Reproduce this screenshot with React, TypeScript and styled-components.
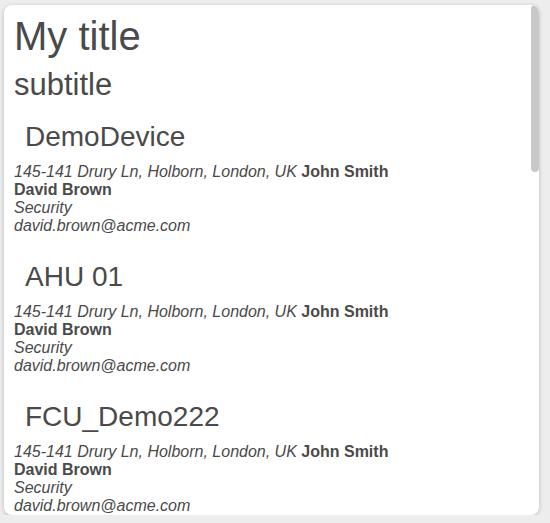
import React from 'react';
import styled, { createGlobalStyle } from 'styled-components';

const GlobalStyle = createGlobalStyle`
  html, body {
    margin: 0;
    padding: 0;
    background: #ededed;
  }

  body {
    font-family: "Liberation Sans", Arial, sans-serif;
    color: #4a4a4a;
  }
`;

const Page = styled.div`
  padding: 5px 0 0 4px;
`;

const Card = styled.div`
  width: 535px;
  height: 510px;
  background: #fff;
  border-radius: 8px;
  box-shadow: 0 1px 4px rgba(0, 0, 0, 0.22);
  overflow: hidden;
  display: flex;
`;

const Content = styled.div`
  flex: 1;
  min-width: 0;
  overflow: hidden;
  padding: 8px 10px 20px;
`;

// scroll rail on the right side of the card
const Rail = styled.div`
  width: 8px;
  flex: none;
  display: flex;
  flex-direction: column;
`;

const Thumb = styled.div<{ $size: number }>`
  height: ${(p) => p.$size}px;
  background: #c8c8c8;
  border-radius: 4px;
`;

const Title = styled.h1`
  margin: 0;
  font-size: 40px;
  line-height: 46px;
  font-weight: normal;
`;

const Subtitle = styled.h2`
  margin: 8px 0 0;
  font-size: 31px;
  line-height: 35px;
  font-weight: normal;
`;

const DeviceList = styled.ul`
  list-style: none;
  margin: 19px 0 0;
  padding: 0;
  display: flex;
  flex-direction: column;
  gap: 26px;
`;

const Device = styled.li`
  display: flex;
  flex-direction: column;
`;

const DeviceName = styled.h3`
  margin: 0 0 10px 11px;
  font-size: 28px;
  line-height: 32px;
  font-weight: normal;
`;

const Details = styled.div`
  font-size: 16px;
  line-height: 18px;

  & i {
    font-style: italic;
  }

  & b {
    font-weight: bold;
  }
`;

type DeviceInfo = {
  name: string,
  address: string,
  owner: string,
  contact: string,
  role: string,
  email: string,
};

const contact = {
  address: '145-141 Drury Ln, Holborn, London, UK',
  owner: 'John Smith',
  contact: 'David Brown',
  role: 'Security',
  email: 'david.brown@acme.com',
};

const devices: DeviceInfo[] = [
  'DemoDevice',
  'AHU 01',
  'FCU_Demo222',
].map((name) => ({ name, ...contact }));

function DeviceItem({ device }: { device: DeviceInfo }) {
  return (
    <Device>
      <DeviceName>{device.name}</DeviceName>
      <Details>
        <i>{device.address}</i>
        {' '}
        <b>{device.owner}</b>
        <br />
        <b>{device.contact}</b>
        <br />
        <i>{device.role}</i>
        <br />
        <i>{device.email}</i>
      </Details>
    </Device>
  );
}

function App() {
  return (
    <>
      <GlobalStyle />
      <Page>
        <Card>
          <Content>
            <Title>My title</Title>
            <Subtitle>subtitle</Subtitle>
            <DeviceList>
              {devices.map((d) => (
                <DeviceItem key={d.name} device={d} />
              ))}
            </DeviceList>
          </Content>
          <Rail>
            <Thumb $size={167} />
          </Rail>
        </Card>
      </Page>
    </>
  );
}

export default App;
